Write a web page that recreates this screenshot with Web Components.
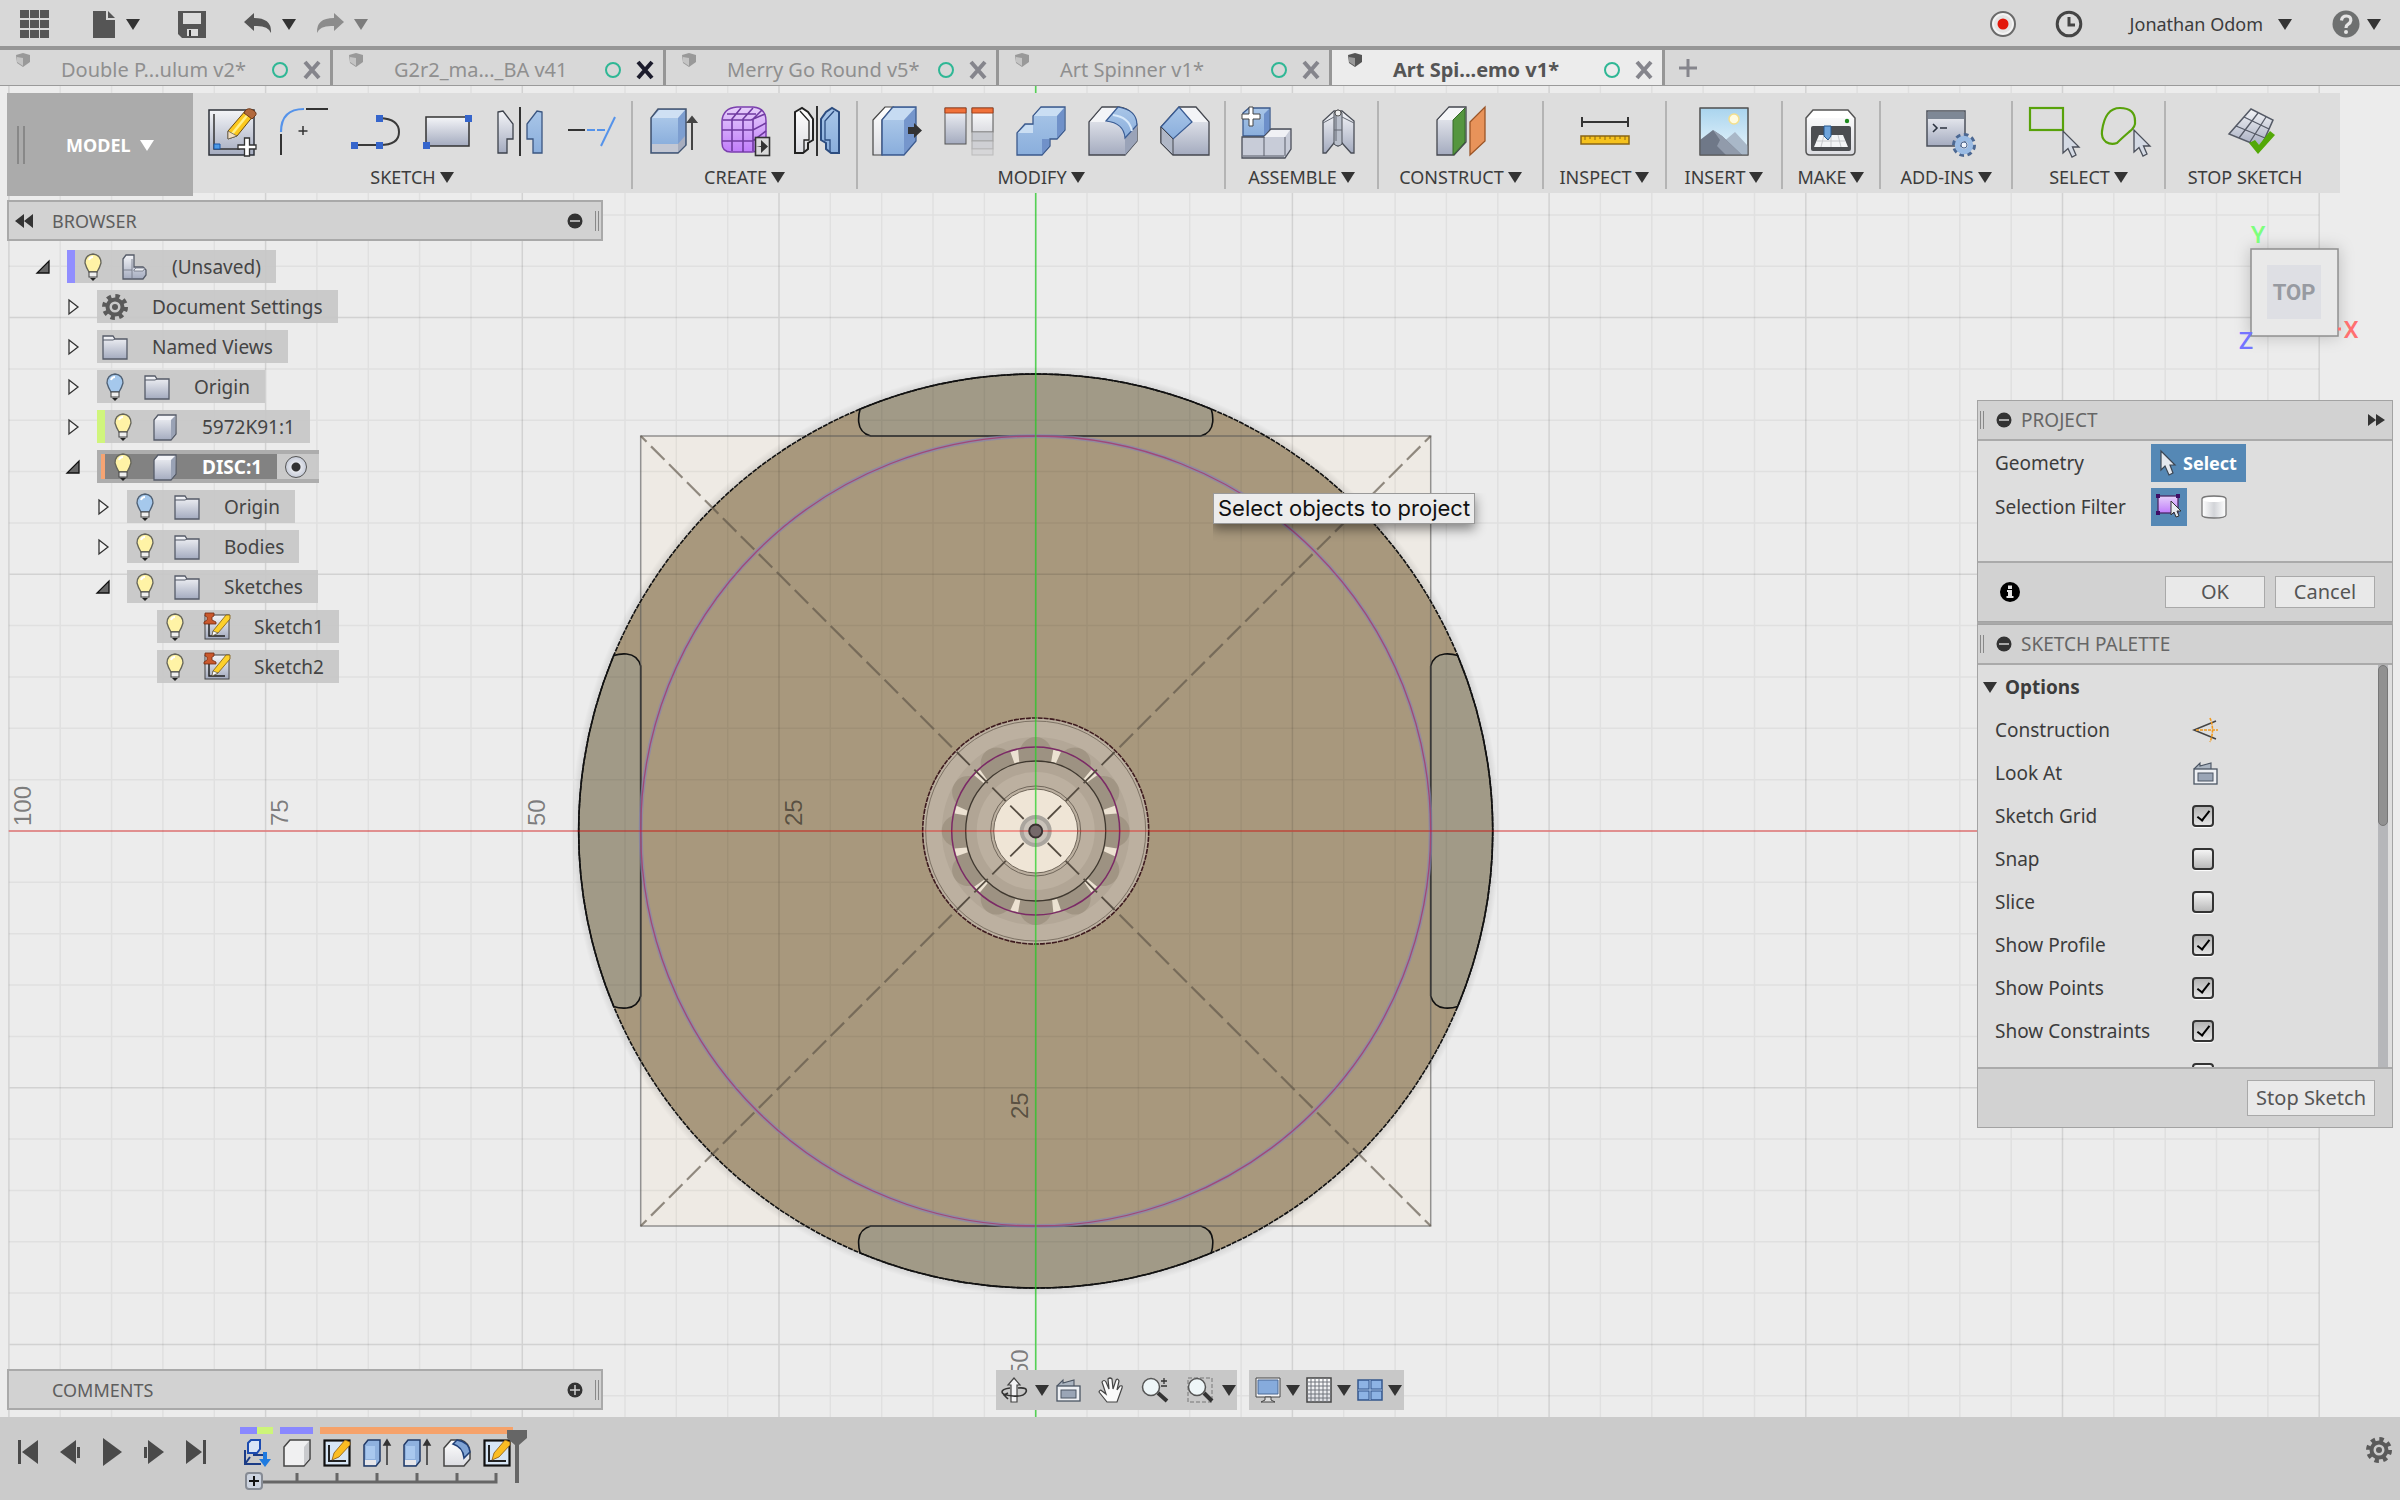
<!DOCTYPE html>
<html lang="en">
<head>
<meta charset="utf-8">
<title>Art Spinner Demo v1*</title>
<style>
  html, body { margin: 0; height: 100%; }

  body {
    display: grid;
    grid-template-rows: auto auto 1fr auto;
    grid-template-columns: 100%;
    min-height: 100vh;
    font-family: "Noto Sans", "Open Sans", sans-serif;
    font-size: 18px;
    line-height: 24px;
    color: #3c3c3c;
    background: #ececec;
  }

  main {
    display: grid;
    grid-template-columns: 596px 1fr 416px;
    grid-template-rows: auto auto 1fr;
    row-gap: 7px;
    min-height: 0;
    isolation: isolate;
  }

  model-canvas { grid-area: 1 / 1 / -1 / -1; z-index: -1; }
  tool-bar { grid-area: 1 / 1 / 2 / -1; margin: 7px 60px 0 7px; }
  .left { grid-area: 2 / 1 / 3 / 2; margin: 0 -7px 0 7px; }
  .right { grid-area: 2 / 3 / 3 / 4; margin: 0 7px 0 -7px; }
  .comments { grid-area: 3 / 1 / 4 / 2; align-self: end; margin: 0 -7px 7px 7px; }
  nav-bar { grid-area: 3 / 1 / 4 / -1; align-self: end; justify-self: center; margin-bottom: 7px; }
  .tree { display: grid; gap: 7px; padding-top: 9px; }
</style>
</head>
<body>
<app-bar user="Jonathan Odom"></app-bar>

<doc-tabs>
  <doc-tab>Double P...ulum v2*</doc-tab>
  <doc-tab hot>G2r2_ma..._BA v41</doc-tab>
  <doc-tab>Merry Go Round v5*</doc-tab>
  <doc-tab>Art Spinner v1*</doc-tab>
  <doc-tab active>Art Spi...emo v1*</doc-tab>
</doc-tabs>

<main>
  <model-canvas></model-canvas>

  <tool-bar>
    <tool-group icons="sketch fillet arc rect mirror extend">SKETCH</tool-group>
    <tool-group icons="extrude form mirror3d">CREATE</tool-group>
    <tool-group icons="presspull params combine fillet3d chamfer">MODIFY</tool-group>
    <tool-group icons="assemble joint">ASSEMBLE</tool-group>
    <tool-group icons="construct">CONSTRUCT</tool-group>
    <tool-group icons="inspect">INSPECT</tool-group>
    <tool-group icons="insert">INSERT</tool-group>
    <tool-group icons="make">MAKE</tool-group>
    <tool-group icons="addins">ADD-INS</tool-group>
    <tool-group icons="selrect sellasso">SELECT</tool-group>
    <tool-group icons="stop" plain>STOP SKETCH</tool-group>
  </tool-bar>

  <div class="left">
    <dock-header toggle="minus" collapse>BROWSER</dock-header>
    <div class="tree" role="tree">
      <tree-node depth="0" open color="#918eff" icons="bulb component">(Unsaved)</tree-node>
      <tree-node depth="1" closed icons="gear">Document Settings</tree-node>
      <tree-node depth="1" closed icons="folder">Named Views</tree-node>
      <tree-node depth="1" closed icons="bulboff folder">Origin</tree-node>
      <tree-node depth="1" closed color="#d0f57c" icons="bulb cube">5972K91:1</tree-node>
      <tree-node depth="1" open active color="#f6a473" icons="bulb cube">DISC:1</tree-node>
      <tree-node depth="2" closed icons="bulboff folder">Origin</tree-node>
      <tree-node depth="2" closed icons="bulb folder">Bodies</tree-node>
      <tree-node depth="2" open icons="bulb folder">Sketches</tree-node>
      <tree-node depth="3" icons="bulb pinned">Sketch1</tree-node>
      <tree-node depth="3" icons="bulb pinned">Sketch2</tree-node>
    </div>
  </div>

  <div class="right">
    <view-cube></view-cube>
    <project-panel></project-panel>
    <sketch-palette></sketch-palette>
  </div>

  <dock-header class="comments" toggle="plus">COMMENTS</dock-header>
  <nav-bar></nav-bar>
</main>

<time-line></time-line>

<script>
// Shared gradients, every icon svg carries its own copy
const defs = `
<defs>
  <linearGradient id="g" x1="0" y1="0" x2="0" y2="1"><stop offset="0" stop-color="#f4f5f8"/><stop offset="1" stop-color="#a4abbf"/></linearGradient>
  <linearGradient id="b" x1="0" y1="0" x2="0" y2="1"><stop offset="0" stop-color="#a9c6e8"/><stop offset="1" stop-color="#8aaedc"/></linearGradient>
  <linearGradient id="p" x1="0" y1="0" x2="0" y2="1"><stop offset="0" stop-color="#e6cffa"/><stop offset="1" stop-color="#c07cfb"/></linearGradient>
  <linearGradient id="w" x1="0" y1="0" x2="0" y2="1"><stop offset="0" stop-color="#fff"/><stop offset="1" stop-color="#dcdde2"/></linearGradient>
  <linearGradient id="c" x1="0" y1="0" x2="1" y2="0"><stop offset="0" stop-color="#fff"/><stop offset=".5" stop-color="#d2d4d8"/><stop offset="1" stop-color="#fff"/></linearGradient>
  <linearGradient id="s" x1="0" y1="0" x2="0" y2="1"><stop offset="0" stop-color="#a9d4ee"/><stop offset="1" stop-color="#eaf6fc"/></linearGradient>
</defs>`

const cursor = '<path d="M0 0V22L5 17.500L9 26L13 24L9.500 16H16Z" fill="#d4dae4" stroke="#4a4f5a" stroke-width="1.300"/>'
const pencil = '<path d="M22 26L40 5Q46 3 48 10L31 31L22 34Z" fill="#fcc81c" stroke="#6b4a10" stroke-width="1"/><path d="M26 29L43 8" stroke="#fff08a" stroke-width="2.500"/><path d="M39 6Q42 2 47 5T49 11L46 14L38 8Z" fill="#b2693c" stroke="#6d3a1b"/><path d="M22 26L31 31L22 34Z" fill="#f3dfc0" stroke="#555" stroke-width=".7"/>'

// name: [width, height, markup]
const icons = {
  down: [14, 12, '<path d="M0 1H14L7 12Z" fill="#333"/>'],
  downgray: [14, 12, '<path d="M0 1H14L7 12Z" fill="#7c7c7c"/>'],
  downwhite: [14, 12, '<path d="M0 1H14L7 12Z" fill="#fff"/>'],
  apps: [30, 28, '<path d="M0 0H9V8H0ZM10 0H19V8H10ZM20 0H29V8H20ZM0 10H9V18H0ZM10 10H19V18H10ZM20 10H29V18H20ZM0 20H9V28H0ZM10 20H19V28H10ZM20 20H29V28H20Z" fill="#555"/>'],
  file: [23, 28, '<path d="M0 1H13V10H22V28H0Z" fill="#555"/><path d="M15 1L22 8H15Z" fill="#555"/>'],
  save: [28, 28, '<path d="M0 1H28V28H4L0 24Z" fill="#555"/><path d="M5 3H23V14H5ZM9 19H20V26H9Z" fill="#dcdcdc"/><path d="M11 20H13V26H11Z" fill="#333"/>'],
  undo: [28, 28, '<path d="M0 12L10 3V8Q28 8 27 23Q24 15 10 16V21Z" fill="#555"/>'],
  redo: [28, 28, '<path d="M28 12L18 3V8Q0 8 1 23Q4 15 18 16V21Z" fill="#8c8c8c"/>'],
  record: [28, 28, '<circle cx="14" cy="14" r="12" fill="#f4f4f4" stroke="#6a6a6a" stroke-width="2"/><circle cx="14" cy="14" r="9" fill="#e4e4e4"/><circle cx="14" cy="14" r="5.500" fill="#e3170a"/>'],
  clock: [28, 28, '<circle cx="14" cy="14" r="11.800" fill="#dcdcdc" stroke="#444" stroke-width="3"/><path d="M14 7V15H20" fill="none" stroke="#444" stroke-width="3"/>'],
  help: [28, 28, '<circle cx="14" cy="14" r="13.500" fill="#6e7070"/><path d="M9.500 10.500Q10 6 14.500 6T18.800 10.500Q18.500 13 15.800 14.500Q14 15.500 14 18" fill="none" stroke="#e4e4e4" stroke-width="3.200"/><circle cx="14" cy="22" r="2" fill="#e4e4e4"/>'],
  doc: [14, 14, '<path d="M0 2L7 0L14 2V9L7 14L1 10Z" fill="#999"/><path d="M1 4L7 5V13L1 9Z" fill="#c4c4c4"/>'],
  docdark: [14, 14, '<path d="M0 2L7 0L14 2V9L7 14L1 10Z" fill="#555"/><path d="M1 4L7 5V13L1 9Z" fill="#999"/>'],
  close: [18, 18, '<path d="M2 1L16 17M16 1L2 17" stroke="currentColor" stroke-width="4"/>'],
  add: [20, 20, '<path d="M10 1V19M1 10H19" stroke="#85858c" stroke-width="3"/>'],

  sketch: [52, 52, '<rect x="3" y="5" width="45" height="45" fill="url(#g)" stroke="#2d3038" stroke-width="1.500"/><path d="M8 9V44H34" fill="none" stroke="#333" stroke-width="1.500"/><path d="M8 39H14V44H8Z" fill="#4c9be8" stroke="#1b57a8"/>' + pencil + '<path d="M38.500 33H43.500V40H50V44H43.500V51H38.500V44H32V40H38.500Z" fill="#fff" stroke="#333" stroke-width="1.300"/>'],
  fillet: [52, 52, '<path d="M3 27Q3 4 26 4" fill="none" stroke="#5593ea" stroke-width="2.200"/><path d="M28 4H50M3 29V50" stroke="#333" stroke-width="2"/><path d="M25 21V30M20.500 26H29.500" stroke="#333" stroke-width="1.500"/>'],
  arc: [52, 52, '<path d="M5 40H30Q49 40 49 27T30 13" fill="none" stroke="#3a3a3a" stroke-width="2"/><path d="M1 37H8V44H1ZM26 37H33V44H26ZM26 10H33V17H26Z" fill="#3565cc"/>'],
  rect: [52, 52, '<rect x="4" y="12" width="43" height="29" fill="url(#g)" stroke="#333" stroke-width="1.500"/><path d="M1 37H8V44H1ZM43 10H50V17H43Z" fill="#3565cc"/>'],
  mirror: [52, 52, '<path d="M26 2V51" stroke="#333" stroke-width="2"/><path d="M4 7L9 6L19 19V34H13V48H4Z" fill="url(#g)" stroke="#3d424c" stroke-width="1.300"/><path d="M48 7L43 6L33 19V34H39V48H48Z" fill="url(#b)" stroke="#3a5580" stroke-width="1.300"/>'],
  extend: [52, 52, '<path d="M2 25H19" stroke="#333" stroke-width="2"/><path d="M21 25H40" stroke="#5593ea" stroke-width="2" stroke-dasharray="8 2"/><path d="M49 12L35 41" stroke="#5593ea" stroke-width="2"/>'],
  extrude: [52, 52, '<path d="M4 13L11 4H39V40L31 48H4Z" fill="#7d9ed0" stroke="#445570" stroke-width="1.500"/><path d="M5 13L12 5H38L31 13Z" fill="#cfe0f3"/><path d="M5 13H31V40H5Z" fill="url(#b)"/><path d="M5 39H31V47H5Z" fill="#c3c7d3"/><path d="M31 39L38 31V40L31 47Z" fill="#a7adbe"/><path d="M45 45V13M41 17L45 12L49 17Z" stroke="#444" stroke-width="2" fill="#444"/>'],
  form: [52, 52, '<path d="M3 16Q4 3 18 2H34Q47 3 47 16V34Q44 47 33 47H12Q3 47 3 38Z" fill="url(#p)" stroke="#7b3fae" stroke-width="1.500"/><path d="M4 15H32L46 9M3 25H34L47 18M3 36H34L47 26M13 46V14L22 3M24 47V14L34 3M34 46V14L43 5M8 9H37" fill="none" stroke="#6f3aa0" stroke-width="1.600"/><rect x="36.500" y="32.500" width="14" height="18" fill="#d8d8d8" stroke="#333" stroke-width="1.600"/><path d="M37 41H42V35L49 41.500L42 48V42Z" fill="#333"/>'],
  mirror3d: [52, 52, '<path d="M26 1V51" stroke="#333" stroke-width="2"/><path d="M4 7L11 3L17 7L22 14V35L17 38V44L12 48H4Z" fill="url(#w)" stroke="#222" stroke-width="2"/><path d="M9 6L18 16V35H13V47" fill="none" stroke="#222" stroke-width="1.300"/><path d="M48 7L41 3L35 7L30 14V35L35 38V44L40 48H48Z" fill="url(#b)" stroke="#2d4d80" stroke-width="2"/><path d="M43 6L34 16V35H39V47" fill="none" stroke="#2d4d80" stroke-width="1.300"/>'],
  presspull: [52, 52, '<path d="M2 15L14 2H22L11 15V50H2Z" fill="url(#w)" stroke="#444" stroke-width="1.200"/><path d="M11 15L22 2H45V36L33 50H11Z" fill="#7596cc" stroke="#3d5c90" stroke-width="1.300"/><path d="M12 15L22 3H44L33 15Z" fill="#c6dbf2"/><path d="M12 15H33V49H12Z" fill="url(#b)"/><path d="M37 22H43V18L51 25.500L43 33V29H37Z" fill="#333"/>'],
  params: [52, 52, '<rect x="2" y="3" width="21" height="36" fill="url(#g)" stroke="#555"/><rect x="29" y="3" width="21" height="24" fill="url(#w)" stroke="#555"/><rect x="29" y="27" width="21" height="9" fill="#c6c8ce" stroke="#999"/><rect x="29" y="36" width="21" height="8" fill="#cfd0d4" stroke="#aaa"/><rect x="29" y="44" width="21" height="6" fill="#d6d6d8" stroke="#bbb"/><path d="M2 3H23V8H2ZM29 3H50V8H29Z" fill="#f0713a" stroke="#a8431a"/>'],
  combine: [52, 52, '<path d="M2 28L10 19H18V11L26 2H50V25L42 34H35V41L27 50H2Z" fill="url(#b)" stroke="#3b598c" stroke-width="1.300"/><path d="M19 11L26 3H49L42 11ZM3 28L11 20H18V28Z" fill="#cadef3"/><path d="M42 11L49 3V25L42 33ZM27 34H34V41L27 49Z" fill="#7091c9"/>'],
  fillet3d: [52, 52, '<path d="M2 17L15 2H32Q50 5 50 24V36L38 50H2Z" fill="url(#g)" stroke="#44474f" stroke-width="1.300"/><path d="M3 17L15 3H31L19 17Z" fill="#f3f4f7"/><path d="M38 33L50 20V36L38 50Z" fill="#9aa3b8"/><path d="M19 16L31 2Q50 5 50 20L38 33Q37 18 19 16Z" fill="url(#b)" stroke="#3a5c94" stroke-width="1.200"/><path d="M26 10Q42 12 45 26" fill="none" stroke="#d8e9fa" stroke-width="2"/>'],
  chamfer: [52, 52, '<path d="M2 22L20 2H37L50 17V50H14L2 38Z" fill="url(#g)" stroke="#44474f" stroke-width="1.300"/><path d="M21 3H36L49 17H34Z" fill="#f3f4f7"/><path d="M2 22L20 2L33 17L14 34Z" fill="url(#b)" stroke="#3a5c94" stroke-width="1.200"/><path d="M2 22L14 34V50L2 38Z" fill="#b0b7c6" stroke="#44474f"/>'],
  assemble: [52, 52, '<path d="M3 8L9 3H30V25L24 31H3Z" fill="url(#b)" stroke="#3b598c" stroke-width="1.300"/><path d="M24 9L29 4V25L24 30Z" fill="#6d90ca"/><path d="M2 32H24L31 24H51V44L45 53H2Z" fill="#c8ccd8" stroke="#4b4f5a" stroke-width="1.300"/><path d="M24 32L31 25H50L45 32Z" fill="#f0f1f5"/><path d="M24 32V51M3 51H44M45 32V51" stroke="#5b5f6a"/><path d="M9 2H13V9H20V14H13V21H9V14H2V9H9Z" fill="#fff" stroke="#444"/>'],
  joint: [52, 52, '<path d="M22 6L11 16V48L14 48L22 38L26 41L30 38L39 48H42V16L30 6Z" fill="url(#g)" stroke="#4a4e57" stroke-width="1.300"/><path d="M22 8Q26 2 30 8V39Q26 43 22 39Z" fill="#b9bfcb" stroke="#4a4e57"/><path d="M22 25H30M11 18L22 12M42 18L30 12M24 10V36" stroke="#646973" fill="none"/><circle cx="26" cy="8" r="3" fill="#eee" stroke="#555"/>'],
  construct: [52, 52, '<path d="M2 15L14 2H31V37L19 50H2Z" fill="url(#g)" stroke="#44474f" stroke-width="1.300"/><path d="M3 15L14 3H30L18 15Z" fill="#f5f6f8"/><path d="M18 15L30 3V37L18 50Z" fill="#55963f" stroke="#37692a"/><path d="M35 17L50 2V36L35 50Z" fill="#e8935a" stroke="#9b5527" stroke-width="1.300"/>'],
  inspect: [52, 52, '<path d="M3 17H49M3 12V22M49 12V22" stroke="#333" stroke-width="2"/><rect x="2" y="31" width="48" height="8" fill="#f6c21c" stroke="#8a6614" stroke-width="1.500"/><path d="M6 31V35M11 31V34M16 31V35M21 31V34M26 31V35M31 31V34M36 31V35M41 31V34M46 31V35" stroke="#8a6614"/>'],
  insert: [52, 52, '<rect x="2" y="3" width="48" height="47" fill="url(#s)" stroke="#444"/><circle cx="36" cy="14" r="5" fill="#fffbe0" stroke="#f4df8c" stroke-width="1.500"/><path d="M24 38L37 27L50 41V50H20Z" fill="#a9b8c8"/><path d="M2 35L15 25L24 31L44 50H2Z" fill="#6f7888"/><path d="M15 25L24 31L44 50H28L19 41L22 35Z" fill="#919bab"/><rect x="2" y="3" width="48" height="47" fill="none" stroke="#555"/>'],
  make: [52, 52, '<path d="M1 13L8 5H43L50 13V46Q50 50 46 50H5Q1 50 1 46Z" fill="url(#w)" stroke="#555" stroke-width="1.500"/><path d="M3 13L9 6H42L48 13Z" fill="#fff"/><circle cx="42" cy="16" r="2.200" fill="#1e8a1e"/><rect x="6" y="21" width="40" height="25" rx="2" fill="#4c4e52"/><path d="M14 30H38L43 42H9Z" fill="#f3f4f6"/><path d="M19 30L16 42M26 30V42M33 30L36 42M12 36H40" stroke="#c6c8cc"/><path d="M19 21H26V31L23 35L19 31Z" fill="#6fa4dc" stroke="#24558a"/>'],
  addins: [52, 52, '<rect x="7" y="6" width="38" height="35" fill="url(#g)" stroke="#4b505b" stroke-width="1.500"/><rect x="8" y="7" width="36" height="7" fill="#7e8896"/><path d="M13 19L17 23L13 27M20 23H27" fill="none" stroke="#2c3340" stroke-width="1.600"/><circle cx="44" cy="40" r="9" fill="none" stroke="#4c6892" stroke-width="6" stroke-dasharray="4 3"/><circle cx="44" cy="40" r="6.500" fill="none" stroke="#9bbce4" stroke-width="5.500"/><circle cx="44" cy="40" r="3" fill="#f0f4fa" stroke="#4c6892"/>'],
  selrect: [52, 52, '<rect x="3" y="3" width="33" height="22" fill="none" stroke="#58a20a" stroke-width="2.200"/><g transform="translate(36 26)">' + cursor + '</g>'],
  sellasso: [52, 52, '<path d="M3 26Q6 3 21 3Q36 3 36 16Q37 22 30 27Q22 34 18 38Q12 40 7 37Q2 33 3 26Z" fill="none" stroke="#58a20a" stroke-width="2.200"/><g transform="translate(35 25)">' + cursor + '</g>'],
  stop: [52, 52, '<path d="M24 4L46 15L34 42L2 29Z" fill="url(#g)" stroke="#555a66" stroke-width="1.500"/><path d="M17 12L42 24M9 21L38 33M31 8L12 33M39 12L23 37" stroke="#555a66" stroke-width="1.300"/><path d="M22 38L28 35L32 40L43 26L48 30L31 49Z" fill="#53a807"/>'],

  bulb: [26, 28, '<path d="M13 1Q21 2 21 10Q20 14 17 19H9Q6 14 5 10Q5 2 13 1Z" fill="#fff3a6" stroke="#66665a" stroke-width="1.300"/><rect x="9" y="19" width="8" height="5" fill="#eee" stroke="#444"/><path d="M10 25H16L13 28Z" fill="#222"/><path d="M9 7Q10 4 13 4" fill="none" stroke="#fff" stroke-width="2"/>'],
  bulboff: [26, 28, '<path d="M13 1Q21 2 21 10Q20 14 17 19H9Q6 14 5 10Q5 2 13 1Z" fill="#a5c8ec" stroke="#4f6074" stroke-width="1.300"/><rect x="9" y="19" width="8" height="5" fill="#eee" stroke="#444"/><path d="M10 25H16L13 28Z" fill="#222"/><path d="M9 7Q10 4 13 4" fill="none" stroke="#fff" stroke-width="2"/>'],
  component: [26, 28, '<path d="M1 6L4 2H12V14H21L24 17V22L21 26H1Z" fill="url(#g)" stroke="#555b68" stroke-width="1.300"/><path d="M12 17L14 15H23L21 18H12ZM1 17H10M10 6V26" fill="#eef0f5" stroke="#6c7280" stroke-width=".8"/>'],
  cube: [26, 28, '<path d="M2 7L6 2H24V21L19 27H2Z" fill="url(#g)" stroke="#555b68" stroke-width="1.300"/><path d="M3 7L7 3H23L19 7Z" fill="#f3f4f8"/><path d="M19 7L23 3V21L19 26Z" fill="#99a2b5"/>'],
  folder: [26, 28, '<path d="M1 3H11L13 6H25V26H1Z" fill="url(#g)" stroke="#555b68" stroke-width="1.300"/><path d="M1 7H11L13 6" fill="none" stroke="#555b68"/>'],
  gear: [26, 28, '<circle cx="13" cy="14" r="10.500" fill="none" stroke="#5a5a5a" stroke-width="5" stroke-dasharray="4.200 4.047"/><circle cx="13" cy="14" r="7.500" fill="none" stroke="#5a5a5a" stroke-width="4"/><circle cx="13" cy="14" r="3" fill="#5a5a5a"/>'],
  pinned: [26, 28, '<rect x="1" y="2" width="24" height="24" fill="url(#g)" stroke="#444"/><path d="M5 10V23H21" fill="none" stroke="#222" stroke-width="1.500"/><path d="M9 18L22 2H26V6L14 20L8 23Z" fill="#fcd02c" stroke="#7d5a10" stroke-width=".8"/><path d="M8 23L9 18L14 20Z" fill="#fff" stroke="#444" stroke-width=".6"/><path d="M1 0H10V3L8 4V7L12 9V11H0V9L3 7V4L1 3Z" fill="#c9582c" stroke="#71290f" stroke-width=".8"/>'],
  open: [14, 14, '<path d="M13 1V13H1Z" fill="#666" stroke="#111" stroke-width="1.300"/>'],
  closed: [14, 18, '<path d="M3 2L12 9L3 16Z" fill="#f2f2f2" stroke="#333" stroke-width="1.300"/>'],
  rewind: [18, 14, '<path d="M9 0V14L0 7ZM18 0V14L9 7Z" fill="#333"/>'],
  forward: [18, 14, '<path d="M0 1V13L8 7ZM8 1V13L17 7Z" fill="#333"/>'],
  minus: [16, 16, '<circle cx="8" cy="8" r="7.500" fill="#333"/><path d="M3 8H13" stroke="#d2d2d2" stroke-width="1.500"/>'],
  plus: [16, 16, '<circle cx="8" cy="8" r="7.500" fill="#333"/><path d="M3 8H13M8 3V13" stroke="#d2d2d2" stroke-width="1.500"/>'],
  info: [20, 20, '<circle cx="10" cy="10" r="10" fill="#000"/><path d="M8 3.500H12V7H8ZM7 8H12V14H13.500V16H6.500V14H8V10H7Z" fill="#e4e4e4"/>'],
  pointer: [18, 26, '<path d="M2 1V20L6 16L10 25L14 23L11 15H16Z" fill="#e4e8ee" stroke="#3c4653" stroke-width="1.200"/>'],
  profile: [26, 26, '<rect x="2" y="2" width="20" height="17" fill="url(#p)" stroke="#4a2a66" stroke-width="1.300"/><path d="M0 0H4V4H0ZM20 0H24V4H20ZM0 17H4V21H0Z" fill="#3f0d66"/><path d="M15 7V21L18 18L20 23L23 22L21 17H25Z" fill="#e8ebf0" stroke="#333"/>'],
  body: [26, 24, '<path d="M1 4Q1 1 13 1T25 4V20Q25 23 13 23T1 20Z" fill="url(#c)" stroke="#777" stroke-width="1.300"/><path d="M2 5Q3 7 13 7T24 5Q23 2 13 2T2 5Z" fill="#fff"/>'],
  construction: [26, 26, '<path d="M24 4L2 13L24 22" fill="none" stroke="#444" stroke-width="1.500"/><path d="M4 13H26M18 1Q23 13 18 25" fill="none" stroke="#f29a1e" stroke-width="1.600" stroke-dasharray="3 1"/>'],
  lookat: [26, 26, '<path d="M2 9L8 3V6L19 3V9" fill="#aab4c0" stroke="#4b5563" stroke-width="1.100"/><rect x="2" y="9" width="23" height="15" fill="#eef0f4" stroke="#4b5563" stroke-width="1.300"/><rect x="6" y="13" width="15" height="8" fill="#9aa5b6" stroke="#4b5563"/>'],
  orbit: [26, 26, '<path d="M10 25V8H7L13 1L19 8H16V25Z" fill="#f2f2f4" stroke="#444" stroke-width="1.200"/><path d="M9 11Q1 12 1 15T12 19T25 15T17 11M7 16L3 18L7 22" fill="none" stroke="#333" stroke-width="1.600"/>'],
  hand: [26, 26, '<path d="M9 25L1 15Q2 12 4 14L8 17L4 5Q6 2 8 5L11 12L10 2Q12 0 14 2L15 12L18 3Q20 1 21 4L19 13L22 9Q25 8 24 11L19 25Z" fill="#fafafa" stroke="#444" stroke-width="1.200"/>'],
  zoom: [28, 26, '<circle cx="10" cy="10" r="8.500" fill="#eef6f8" stroke="#555" stroke-width="1.500"/><path d="M17 16L26 24" stroke="#333" stroke-width="4"/><path d="M20 4H26M23 1V7M20 9H26" stroke="#333" stroke-width="1.300"/>'],
  zoomwin: [28, 26, '<rect x="2" y="1" width="24" height="24" fill="none" stroke="#777" stroke-dasharray="4 2"/><circle cx="11" cy="10" r="8.500" fill="#eef6f8" stroke="#555" stroke-width="1.500"/><path d="M18 16L26 24" stroke="#333" stroke-width="4"/>'],
  display: [26, 26, '<path d="M1 1H25V20H1Z" fill="#f4f4f6" stroke="#444"/><path d="M3 3H23V17H3Z" fill="#86abdc" stroke="#4a6894"/><path d="M10 20H16V23L20 25H6L10 23Z" fill="#ddd" stroke="#444"/>'],
  grid: [26, 26, '<rect x="1" y="1" width="24" height="24" fill="url(#w)" stroke="#444" stroke-width="1.500"/><path d="M5 1V25M9 1V25M13 1V25M17 1V25M21 1V25M1 5H25M1 9H25M1 13H25M1 17H25M1 21H25" stroke="#70747d"/>'],
  views: [26, 26, '<path d="M1 3H25V23H1Z" fill="#8db3e4" stroke="#34578c" stroke-width="1.500"/><path d="M13 3V23M1 13H25" stroke="#34578c" stroke-width="3"/><path d="M13 3V23M1 13H25" stroke="#a9c8ef"/>'],

  first: [22, 28, '<path d="M1 2H4V26H1ZM21 2V26L5 14Z" fill="#4a4a4a"/>'],
  prev: [22, 28, '<path d="M17 2V26L1 14ZM18 9H21V20H18Z" fill="#4a4a4a"/>'],
  play: [22, 28, '<path d="M2 0V28L21 14Z" fill="#4a4a4a"/>'],
  next: [22, 28, '<path d="M5 2V26L21 14ZM1 9H4V20H1Z" fill="#4a4a4a"/>'],
  last: [22, 28, '<path d="M18 2H21V26H18ZM1 2V26L17 14Z" fill="#4a4a4a"/>'],
  tinsert: [28, 28, '<path d="M2 11V25H18M7 18L2 25M10 16H22" fill="none" stroke="#1c3c86" stroke-width="2"/><path d="M5 4L8 1H17V10L14 14H5Z" fill="#d9e5f6" stroke="#1c4bb0" stroke-width="2"/><path d="M20 13H24V20H28L22 28L16 20H20Z" fill="#1f7be0"/>'],
  tbox: [28, 28, '<path d="M1 8L7 1H27V20L21 27H1Z" fill="#f0f0f1" stroke="#444" stroke-width="1.500"/><path d="M21 8L26 2V20L21 26Z" fill="#c9cacd"/>'],
  tsketch: [28, 28, '<rect x="1.500" y="1.500" width="25" height="25" fill="#d7e6f6" stroke="#111" stroke-width="2.200"/><path d="M6 6V22H23" fill="none" stroke="#222" stroke-width="2"/><path d="M11 14L22 1L27 3V6L16 18L9 21Z" fill="#fbbd22" stroke="#8a5a10" stroke-width=".8"/>'],
  textrude: [28, 28, '<path d="M1 6L5 1H17V22L13 27H1Z" fill="#8fb1de" stroke="#223a66" stroke-width="1.500"/><path d="M2 21H13V26H2Z" fill="#e6e6ea"/><path d="M3 7H12V20H3Z" fill="#a9c8ee"/><path d="M24 26V4M21 6L24 1L27 6Z" fill="#333" stroke="#333" stroke-width="1.500"/>'],
  tfillet: [28, 28, '<path d="M1 9L8 1H18Q27 4 27 14V20L21 27H1Z" fill="url(#w)" stroke="#444" stroke-width="1.500"/><path d="M10 5L14 1Q26 3 27 13L21 19Q20 8 10 5Z" fill="#7fa3d4" stroke="#1f3f78" stroke-width="1.500"/>'],
  expand: [18, 18, '<rect x="1" y="1" width="16" height="16" rx="3" fill="#ccd3df" stroke="#868b94" stroke-width="2"/><path d="M9 4V14M4 9H14" stroke="#111" stroke-width="2"/>'],
}

const drawIcon = (name) => {
  const [w, h, body] = icons[name]
  return `<svg width="${w}" height="${h}" viewBox="0 0 ${w} ${h}" aria-hidden="true">${defs}${body}</svg>`
}

class BaseElement extends HTMLElement {
  constructor() {
    super()
    this.attachShadow({ mode: 'open' })
  }

  connectedCallback() {
    const template = document.createElement('template')
    template.innerHTML = this.render()
    this.shadowRoot.replaceChildren(template.content.cloneNode(true))
  }
}

customElements.define('ui-icon', class extends BaseElement {
  render() {
    return `
<style>
  :host { display: inline-flex; flex: none; }
  svg { display: block; overflow: visible; }
</style>
${drawIcon(this.getAttribute('name'))}`
  }
})

const buttonReset = `
  button {
    display: flex;
    align-items: center;
    padding: 0;
    border: 0;
    background: none;
    font: inherit;
    color: inherit;
  }`

customElements.define('app-bar', class extends BaseElement {
  render() {
    return `
<style>
  :host {
    display: flex;
    align-items: center;
    justify-content: space-between;
    height: 44px;
    padding: 2px 19px 0 20px;
    background: #d8d8d8;
    border-bottom: 4px solid #969696;
  }
  div { display: flex; align-items: center; }
  .left { gap: 38px; }
  .left .apps { margin-right: 5px; }
  .left .edit { gap: 20px; }
  .right { gap: 38px; }
  ${buttonReset}
  button { gap: 10px; }
  .user { gap: 15px; margin: 0 2px 0 9px; }
  .help { gap: 7px; }
</style>
<div class="left">
  <button class="apps" aria-label="Data panel"><ui-icon name="apps"></ui-icon></button>
  <button aria-label="File"><ui-icon name="file"></ui-icon><ui-icon name="down"></ui-icon></button>
  <button aria-label="Save"><ui-icon name="save"></ui-icon></button>
  <div class="edit">
    <button aria-label="Undo"><ui-icon name="undo"></ui-icon><ui-icon name="down"></ui-icon></button>
    <button aria-label="Redo"><ui-icon name="redo"></ui-icon><ui-icon name="downgray"></ui-icon></button>
  </div>
</div>
<div class="right">
  <button aria-label="Record"><ui-icon name="record"></ui-icon></button>
  <button aria-label="Job status"><ui-icon name="clock"></ui-icon></button>
  <button class="user">${this.getAttribute('user')}<ui-icon name="down"></ui-icon></button>
  <button class="help" aria-label="Help"><ui-icon name="help"></ui-icon><ui-icon name="down"></ui-icon></button>
</div>`
  }
})

customElements.define('doc-tabs', class extends BaseElement {
  render() {
    return `
<style>
  :host {
    display: flex;
    height: 35px;
    background: #d8d8d8;
    border-bottom: 1px solid #9a9a9a;
  }
  ${buttonReset}
  button { margin-left: 13px; }
</style>
<slot></slot>
<button aria-label="New tab"><ui-icon name="add"></ui-icon></button>`
  }
})

customElements.define('doc-tab', class extends BaseElement {
  render() {
    const active = this.hasAttribute('active')
    return `
<style>
  :host {
    display: flex;
    align-items: center;
    flex: 0 1 333px;
    box-sizing: border-box;
    padding: 5px 9px 0 16px;
    border-right: 3px solid #969696;
    font-size: 20px;
    color: #8f8f8f;
  }
  :host([active]) {
    background: #ececec;
    color: #555;
    font-weight: 700;
  }
  .doc { align-self: flex-start; margin-top: -2px; }
  .title { flex: 1; margin-left: 31px; white-space: nowrap; }
  i {
    width: 12px;
    height: 12px;
    margin-right: 15px;
    border: 2px solid #2fb795;
    border-radius: 50%;
  }
  ${buttonReset}
  button { color: #85858c; }
  :host([hot]) button { color: #1c1c2c; }
</style>
<ui-icon class="doc" name="${active ? 'docdark' : 'doc'}"></ui-icon>
<span class="title"><slot></slot></span>
<i></i>
<button aria-label="Close"><ui-icon name="close"></ui-icon></button>`
  }
})

customElements.define('tool-bar', class extends BaseElement {
  render() {
    return `
<style>
  :host {
    display: grid;
    grid-template-columns: 186px 440px 225px 368px 153px 165px 123px 116px 98px 132px 153px 1fr;
    height: 100px;
    background: #ddd;
  }
  ${buttonReset}
  .model {
    gap: 9px;
    padding-left: 10px;
    background: #ababab;
    color: #fff;
    font-size: 18px;
    font-weight: 700;
  }
  .grip {
    width: 4px;
    height: 38px;
    margin-right: 32px;
    border: solid #888;
    border-width: 0 2px;
  }
</style>
<button class="model"><span class="grip"></span>MODEL<ui-icon name="downwhite"></ui-icon></button>
<slot></slot>`
  }
})

customElements.define('tool-group', class extends BaseElement {
  render() {
    const buttons = this.getAttribute('icons').split(' ')
      .map((name) => `<button aria-label="${name}"><ui-icon name="${name}"></ui-icon></button>`)
      .join('')
    const arrow = this.hasAttribute('plain') ? '' : '<ui-icon name="down"></ui-icon>'
    return `
<style>
  :host {
    display: flex;
    flex-direction: column;
    align-items: center;
    box-sizing: border-box;
    margin: 8px 0 7px;
    padding-top: 4px;
    border-right: 2px solid #b4b4b4;
    font-size: 18px;
  }
  :host([plain]) { border-right: 0; }
  .tools { display: flex; }
  ${buttonReset}
  .tools button { width: 72px; justify-content: center; }
  .label { gap: 4px; margin-top: 8px; white-space: nowrap; }
  :host([plain]) .label { padding-right: 16px; }
</style>
<div class="tools">${buttons}</div>
<button class="label"><slot></slot>${arrow}</button>`
  }
})

customElements.define('dock-header', class extends BaseElement {
  render() {
    const collapse = this.hasAttribute('collapse') ? '<button aria-label="Collapse"><ui-icon name="rewind"></ui-icon></button>' : ''
    return `
<style>
  :host {
    display: flex;
    align-items: center;
    height: 37px;
    padding-right: 2px;
    border: 2px solid #a9a9a9;
    background: #d2d2d2;
    font-size: 18px;
    color: #5e5e5e;
  }
  ${buttonReset}
  .lead { display: flex; width: 37px; padding-left: 6px; }
  .title { flex: 1; }
  .grip {
    width: 2px;
    height: 20px;
    margin-left: 12px;
    border: solid #888;
    border-width: 0 1px;
  }
</style>
<span class="lead">${collapse}</span>
<span class="title"><slot></slot></span>
<button aria-label="Toggle"><ui-icon name="${this.getAttribute('toggle')}"></ui-icon></button>
<span class="grip"></span>`
  }
})

customElements.define('tree-node', class extends BaseElement {
  render() {
    const state = this.hasAttribute('open') ? 'open' : this.hasAttribute('closed') ? 'closed' : ''
    const color = this.getAttribute('color')
    const glyphs = this.getAttribute('icons').split(' ')
      .map((name) => `<ui-icon name="${name}"></ui-icon>`)
      .join('')
    const radio = this.hasAttribute('active') ? '<input type="radio" checked aria-label="Activate component">' : ''
    return `
<style>
  :host {
    display: flex;
    align-items: center;
    height: 33px;
    margin-left: ${22 + 30 * this.getAttribute('depth')}px;
    font-size: 19px;
    color: #444;
  }
  ${buttonReset}
  .twist { width: 28px; margin-right: 10px; justify-content: center; }
  .row {
    display: flex;
    align-items: center;
    height: 100%;
    background: rgba(199, 199, 199, 0.93);
  }
  .bar { width: 8px; height: 100%; background: ${color || 'none'}; }
  .item {
    display: flex;
    align-items: center;
    gap: 16px;
    height: 100%;
    padding: 0 15px 0 5px;
  }
  .text { margin-left: 8px; white-space: nowrap; }
  :host([active]) .row { box-sizing: border-box; border: solid #adadad; border-width: 4px 0 4px 4px; }
  :host([active]) .bar { width: 4px; }
  :host([active]) .item { background: #828282; color: #fff; font-weight: 700; }
  input {
    appearance: none;
    width: 22px;
    height: 22px;
    margin: 0 12px 0 8px;
    border: 1px solid #555;
    border-radius: 50%;
    background: radial-gradient(#333 0 4px, #e4e6ec 5px, #c2c8d6 11px);
  }
</style>
<button class="twist" aria-label="Expand">${state && `<ui-icon name="${state}"></ui-icon>`}</button>
<div class="row">
  ${color ? '<span class="bar"></span>' : ''}
  <span class="item">${glyphs}<span class="text"><slot></slot></span></span>
  ${radio}
</div>`
  }
})

customElements.define('model-canvas', class extends BaseElement {
  render() {
    // everything is drawn round the sketch origin, 25 mm is 256.7px
    const step = 51.34
    let minor = ''
    let major = ''
    for (let i = -20; i <= 25; i++) {
      const line = `M${(i * step).toFixed(1)} -745V600`
      i % 5 ? minor += line : major += line
    }
    for (let i = -14; i <= 11; i++) {
      const line = `M-1027 ${(i * step).toFixed(1)}H1283.500`
      i % 5 ? minor += line : major += line
    }

    const flat = '<path d="M-175.500 -422Q-177.500 -416 -177 -409Q-176 -398 -165 -395H165Q176 -398 177 -409Q177.500 -416 175.500 -422A457 457 0 0 0 -175.500 -422Z"/>'
    const flats = [0, 90, 180, 270].map((a) => `<g transform="rotate(${a})">${flat}</g>`).join('')
    const diagonals = [0, 90, 180, 270].map((a) => `<path d="M12 12L395 395" transform="rotate(${a})"/>`).join('')
    const spokes = [0, 90, 180, 270].map((a) => `<path d="M12 12L79 79" transform="rotate(${a})"/>`).join('')
    let balls = ''
    let gaps = ''
    for (let a = 0; a < 360; a += 30) {
      balls += `<circle cy="-78" r="16" transform="rotate(${a})"/>`
      gaps += `<path d="M-4 -83H4L2 -71H-3Z" transform="rotate(${a + 15})"/>`
    }

    return `
<style>
  :host { display: block; position: relative; overflow: hidden; min-height: 0; background: #ececec; }
  svg { position: absolute; width: 100%; height: 100%; }
  text { font-family: "Liberation Sans", sans-serif; font-size: 24px; fill: rgba(0, 0, 0, 0.48); }
</style>
<svg viewBox="0 0 2400 1331" preserveAspectRatio="xMidYMid slice">
  <defs>
    <radialGradient id="glow"><stop offset=".97" stop-color="#000" stop-opacity=".18"/><stop offset="1" stop-color="#000" stop-opacity="0"/></radialGradient>
  </defs>
  <g transform="translate(1035.700 745)" fill="none">
    <rect x="-395" y="-395" width="790" height="790" fill="#eeeae4"/>
    <circle r="465" fill="url(#glow)"/>
    <circle r="457" fill="#a8987d"/>
    <g fill="#a19a87" stroke="#111" stroke-width="1.600">${flats}</g>
    <path d="${minor}" stroke="#000" stroke-opacity=".05" stroke-width="1.500"/>
    <path d="${major}" stroke="#000" stroke-opacity=".11" stroke-width="1.500"/>
    <rect x="-395" y="-395" width="790" height="790" stroke="#555" stroke-opacity=".6" stroke-width="1.500"/>
    <circle r="457" stroke="#111" stroke-width="1.600" stroke-dasharray="5 1"/>
    <g stroke="#5c5346" stroke-opacity=".65" stroke-width="2.200" stroke-dasharray="19 6.400">${diagonals}</g>
    <circle r="395" stroke="#8683b4" stroke-width="4" stroke-opacity=".65"/>
    <circle r="395" stroke="#a04878" stroke-width="1.300"/>

    <circle r="113" fill="#bcb0a0" stroke="#3d1a1e" stroke-width="1.600" stroke-dasharray="5 1"/>
    <circle r="110" stroke="#7d7264"/>
    <circle r="94" fill="#b3a797"/>
    <g fill="#8f8372" fill-opacity=".5">${balls}</g>
    <circle r="77" stroke="#9d9282" stroke-width="13"/>
    <g fill="#ece2d2">${gaps}</g>
    <circle r="70" fill="#b1a595" stroke="#3f382f" stroke-width="1.300"/>
    <circle r="59" fill="#bcb0a0"/>
    <circle r="84" stroke="#7b2a66" stroke-width="1.500"/>
    <circle r="45" stroke="#70665a"/>
    <circle r="42" fill="#efe5d6" stroke="#70665a"/>
    <g stroke="#564d42" stroke-width="1.800" stroke-dasharray="19 6.400">${spokes}</g>
    <circle r="14" fill="#cac3ba" stroke="#aaa59e" stroke-width="4"/>
    <path d="M-1027 0H1283" stroke="#f00000" stroke-opacity=".45" stroke-width="1.600"/>
    <path d="M0 -745V600" stroke="#2ad02a" stroke-opacity=".75" stroke-width="1.600"/>
    <circle r="6.500" fill="#75696a" stroke="#3a3232" stroke-width="2"/>

    <text transform="translate(-1005 -5) rotate(-90)">100</text>
    <text transform="translate(-748 -5) rotate(-90)">75</text>
    <text transform="translate(-491 -5) rotate(-90)">50</text>
    <text transform="translate(-234 -5) rotate(-90)">25</text>
    <text transform="translate(-8 288) rotate(-90)">25</text>
    <text transform="translate(-8 545) rotate(-90)">50</text>
  </g>
  <foreignObject x="1213" y="407" width="290" height="70">
    <hint-tip>Select objects to project</hint-tip>
  </foreignObject>
</svg>`
  }
})

customElements.define('hint-tip', class extends BaseElement {
  render() {
    return `
<style>
  :host {
    display: inline-block;
    padding: 2px 4px 3px;
    border: 1px solid #999;
    background: #ececec;
    box-shadow: 0 5px 12px rgba(0, 0, 0, 0.45);
    font: 22px/24px Inter, Roboto, sans-serif;
    color: #111;
    white-space: nowrap;
  }
</style>
<slot></slot>`
  }
})

customElements.define('view-cube', class extends BaseElement {
  render() {
    return `
<style>
  :host { display: flex; justify-content: flex-end; height: 200px; padding-right: 34px; }
  svg { width: 130px; height: 160px; }
  text { font: 500 24px Roboto, sans-serif; text-anchor: middle; }
  .face { font-weight: 700; font-size: 22px; fill: #979aa1; }
  .cube { filter: drop-shadow(0 0 8px rgba(0, 0, 0, 0.2)); }
</style>
<svg viewBox="0 0 130 160">
  <rect class="cube" x="22" y="49" width="87" height="87" fill="#e9e9e9" stroke="#8f8f8f" stroke-width="1.500"/>
  <rect x="38" y="65" width="54" height="54" fill="#dedfe4"/>
  <path d="M109 129H112" stroke="#ff7070" stroke-width="3"/>
  <text class="face" x="65" y="100">TOP</text>
  <text x="29" y="43" fill="#7dff7d">Y</text>
  <text x="122" y="138" fill="#ff7070">X</text>
  <text x="17" y="149" fill="#7474ff">Z</text>
</svg>`
  }
})

// Right hand panels: header, body and footer slots
customElements.define('side-panel', class extends BaseElement {
  render() {
    const more = this.hasAttribute('more') ? '<button aria-label="Expand"><ui-icon name="forward"></ui-icon></button>' : ''
    return `
<style>
  :host { display: block; border: 1px solid #a3a3a3; background: #dedede; }
  header {
    display: flex;
    align-items: center;
    height: 38px;
    padding: 0 6px 0 2px;
    border-bottom: 2px solid #aaa;
    background: #d2d2d2;
    font-size: 19px;
    color: #666;
  }
  .grip { width: 2px; height: 18px; border: solid #888; border-width: 0 1px; margin-right: 12px; }
  .title { flex: 1; margin-left: 9px; }
  ${buttonReset}
  footer {
    display: flex;
    align-items: center;
    height: 58px;
    padding: 0 17px;
    border-top: 2px solid #aaa;
    background: #d2d2d2;
  }
</style>
<header>
  <span class="grip"></span>
  <button aria-label="Collapse"><ui-icon name="minus"></ui-icon></button>
  <span class="title">${this.getAttribute('heading')}</span>
  ${more}
</header>
<slot></slot>
<footer><slot name="footer"></slot></footer>`
  }
})

customElements.define('push-button', class extends BaseElement {
  render() {
    return `
<style>
  :host { display: block; }
  button {
    width: 100%;
    padding: 3px 6px;
    border: 1px solid #a9a9a9;
    background: #e9e9e9;
    font: inherit;
    font-size: 20px;
    line-height: 24px;
    color: #555;
    white-space: nowrap;
  }
  :host([tall]) button { padding: 5px 8px; }
</style>
<button><slot></slot></button>`
  }
})

customElements.define('project-panel', class extends BaseElement {
  render() {
    return `
<style>
  :host { display: block; border-bottom: 2px solid #a9a9a9; font-size: 19px; }
  .body { display: grid; gap: 6px; padding: 3px 17px 35px; }
  .line { display: grid; grid-template-columns: 156px auto; justify-content: start; align-items: center; height: 38px; }
  .filters { display: flex; gap: 14px; align-items: center; }
  ${buttonReset}
  .select {
    gap: 6px;
    height: 38px;
    padding: 0 9px 0 8px;
    background: #5588b5;
    color: #fff;
    font-size: 18px;
    font-weight: 700;
  }
  .on { width: 36px; height: 38px; justify-content: center; background: #5588b5; }
  .info { flex: 1; padding-left: 5px; }
  push-button { width: 100px; margin-left: 10px; }
</style>
<side-panel heading="PROJECT" more>
  <div class="body">
    <div class="line"><span>Geometry</span><button class="select"><ui-icon name="pointer"></ui-icon>Select</button></div>
    <div class="line">
      <span>Selection Filter</span>
      <div class="filters">
        <button class="on" aria-label="Entities"><ui-icon name="profile"></ui-icon></button>
        <button aria-label="Bodies"><ui-icon name="body"></ui-icon></button>
      </div>
    </div>
  </div>
  <ui-icon class="info" slot="footer" name="info"></ui-icon>
  <push-button slot="footer">OK</push-button>
  <push-button slot="footer">Cancel</push-button>
</side-panel>`
  }
})

customElements.define('option-row', class extends BaseElement {
  render() {
    const icon = this.getAttribute('icon')
    const control = icon
      ? `<button id="control"><ui-icon name="${icon}"></ui-icon></button>`
      : `<input id="control" type="checkbox" ${this.hasAttribute('checked') ? 'checked' : ''}>`
    return `
<style>
  :host {
    display: grid;
    grid-template-columns: 197px auto;
    justify-content: start;
    align-items: center;
    flex: none;
    height: 43px;
    padding-left: 17px;
  }
  ${buttonReset}
  input {
    appearance: none;
    box-sizing: border-box;
    width: 22px;
    height: 22px;
    margin: 0;
    border: 2px solid #333;
    border-radius: 4px;
    background: linear-gradient(#f4f4f4, #b9b9b9);
    box-shadow: 0 1px 1px #fff;
  }
  input:checked { background: linear-gradient(#b4b4b4, #e4e4e4); }
  input:checked::before {
    content: '';
    display: block;
    width: 5px;
    height: 11px;
    margin: 1px 0 0 6px;
    border: solid #000;
    border-width: 0 2px 2px 0;
    transform: rotate(38deg);
  }
</style>
<label for="control"><slot></slot></label>
${control}`
  }
})

customElements.define('sketch-palette', class extends BaseElement {
  render() {
    return `
<style>
  :host { display: block; font-size: 19px; }
  .body { display: flex; height: 402px; }
  .list { display: flex; flex-direction: column; flex: 1; overflow: hidden; }
  ${buttonReset}
  h2 { margin: 0; font-size: 19px; line-height: 24px; }
  h2 button { gap: 8px; height: 43px; padding-left: 5px; font-weight: 700; }
  .track { width: 10px; margin-right: 4px; background: #b6b7ba; }
  .thumb { width: 8px; height: 159px; border: 1px solid #777; border-radius: 5px; background: #919191; }
  push-button { margin-left: auto; }
</style>
<side-panel heading="SKETCH PALETTE">
  <div class="body">
    <div class="list">
      <h2><button><ui-icon name="down"></ui-icon>Options</button></h2>
      <option-row icon="construction">Construction</option-row>
      <option-row icon="lookat">Look At</option-row>
      <option-row checked>Sketch Grid</option-row>
      <option-row>Snap</option-row>
      <option-row>Slice</option-row>
      <option-row checked>Show Profile</option-row>
      <option-row checked>Show Points</option-row>
      <option-row checked>Show Constraints</option-row>
      <option-row></option-row>
    </div>
    <div class="track"><div class="thumb"></div></div>
  </div>
  <push-button slot="footer" tall>Stop Sketch</push-button>
</side-panel>`
  }
})

customElements.define('nav-bar', class extends BaseElement {
  render() {
    return `
<style>
  :host { display: flex; gap: 12px; }
  div { display: flex; align-items: center; height: 40px; background: #c8c8c8; }
  ${buttonReset}
  .views { gap: 17px; padding: 0 1px 0 5px; }
  .views button { gap: 8px; }
  .views button:first-child { margin-right: -11px; }
  .display { gap: 6px; padding: 0 2px 0 6px; }
  .display button { gap: 5px; }
</style>
<div class="views">
  <button aria-label="Orbit"><ui-icon name="orbit"></ui-icon><ui-icon name="down"></ui-icon></button>
  <button aria-label="Look at"><ui-icon name="lookat"></ui-icon></button>
  <button aria-label="Pan"><ui-icon name="hand"></ui-icon></button>
  <button aria-label="Zoom"><ui-icon name="zoom"></ui-icon></button>
  <button aria-label="Fit"><ui-icon name="zoomwin"></ui-icon><ui-icon name="down"></ui-icon></button>
</div>
<div class="display">
  <button aria-label="Display settings"><ui-icon name="display"></ui-icon><ui-icon name="down"></ui-icon></button>
  <button aria-label="Grid settings"><ui-icon name="grid"></ui-icon><ui-icon name="down"></ui-icon></button>
  <button aria-label="Viewports"><ui-icon name="views"></ui-icon><ui-icon name="down"></ui-icon></button>
</div>`
  }
})

customElements.define('time-line', class extends BaseElement {
  render() {
    const controls = ['first', 'prev', 'play', 'next', 'last']
      .map((name) => `<button aria-label="${name}"><ui-icon name="${name}"></ui-icon></button>`)
      .join('')
    const features = ['tinsert', 'tbox', 'tsketch', 'textrude', 'textrude', 'tfillet', 'tsketch']
      .map((name) => `<button aria-label="${name.slice(1)}"><ui-icon name="${name}"></ui-icon></button>`)
      .join('')
    return `
<style>
  :host {
    display: flex;
    height: 83px;
    padding: 0 8px 0 17px;
    box-sizing: border-box;
    background: #cbcbcb;
  }
  ${buttonReset}
  .controls { display: flex; gap: 20px; height: 70px; }
  .track { display: grid; grid-template-rows: 7px 28px 18px; row-gap: 5px; width: 273px; margin: 10px 0 0 33px; align-content: start; }
  .bars { display: grid; grid-template-columns: 17px 16px 33px 1fr; }
  .bars i:nth-child(1) { background: #8a88ff; }
  .bars i:nth-child(2) { background: #cdf57a; }
  .bars i:nth-child(3) { margin-left: 7px; margin-right: -7px; background: #8a88ff; }
  .bars i:nth-child(4) { margin-left: 14px; background: #f6a26a; }
  .features { display: flex; gap: 12px; padding-left: 3px; }
  .ruler { display: flex; padding-left: 5px; }
  .marker { margin: 13px 0 0 -6px; }
  .gear { margin: 19px 0 0 auto; align-self: flex-start; }
</style>
<div class="controls">${controls}</div>
<div class="track">
  <div class="bars"><i></i><i></i><i></i><i></i></div>
  <div class="features">${features}</div>
  <div class="ruler">
    <button aria-label="Expand timeline"><ui-icon name="expand"></ui-icon></button>
    <svg width="236" height="18" viewBox="0 0 236 18"><path d="M0 10H233V1M194 1V10M154 1V10M114 1V10M74 1V10M34 1V10" fill="none" stroke="#666" stroke-width="3"/></svg>
  </div>
</div>
<svg class="marker" width="20" height="54" viewBox="0 0 20 54"><path d="M0 0H20V8L12 15V53H8V15L0 8Z" fill="#666"/></svg>
<button class="gear" aria-label="Timeline settings"><ui-icon name="gear"></ui-icon></button>`
  }
})
</script>
</body>
</html>
